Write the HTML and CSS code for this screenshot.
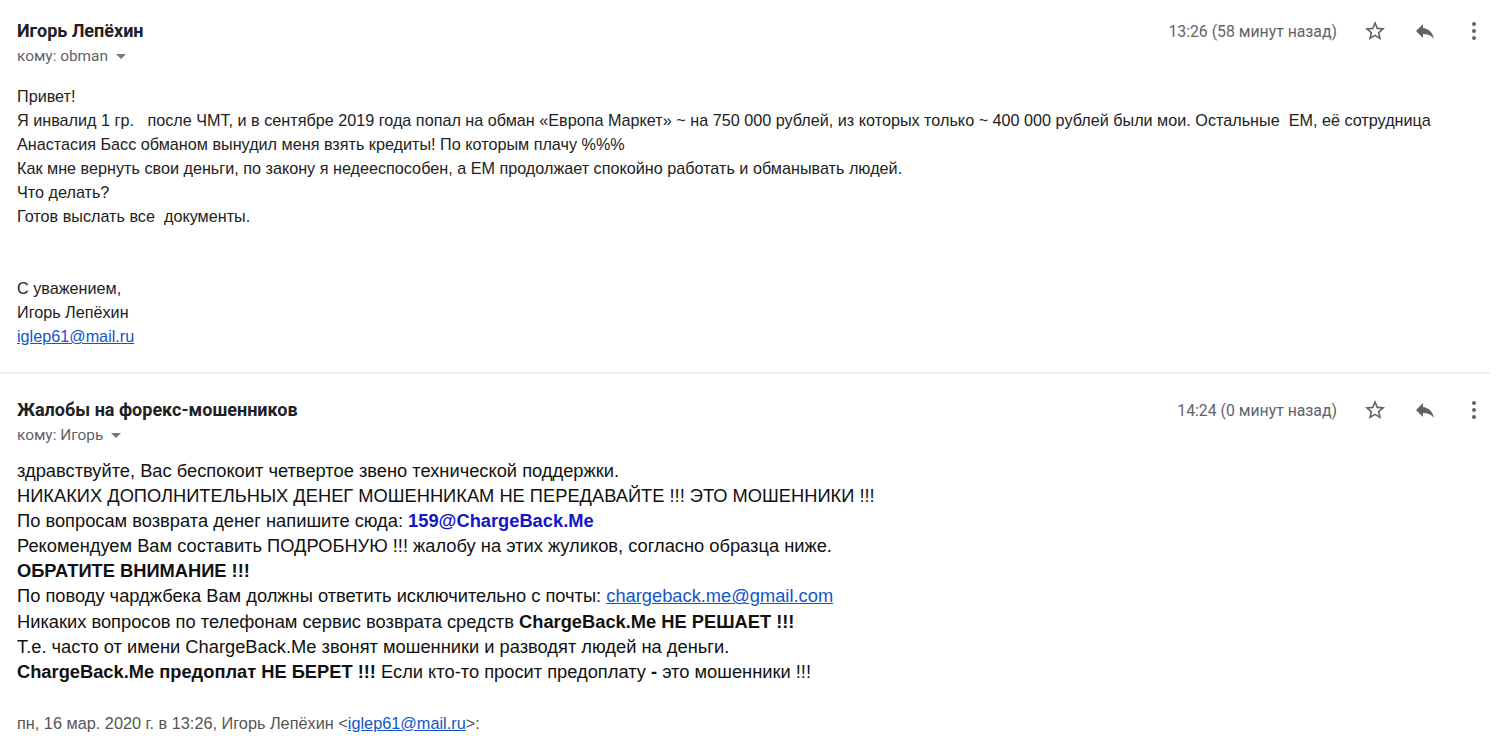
FILE: index.html
```html
<!DOCTYPE html>
<html lang="ru">
<head>
<meta charset="utf-8">
<link rel="stylesheet" href="styles.css">
</head>
<body>
<div class="thread">
  <div class="msg msg-first">
    <div class="msg-head">
      <div class="sender">
        <div class="name">Игорь Лепёхин</div>
        <div class="to">кому: obman <span class="caret"></span></div>
      </div>
      <div class="meta">
        <span class="time">13:26 (58 минут назад)</span>
        <svg class="ic ic-star" viewBox="0 0 24 24"><path d="M22 9.24l-7.19-.62L12 2 9.19 8.63 2 9.24l5.46 4.73L5.82 21 12 17.27 18.18 21l-1.63-7.03L22 9.24zM12 15.4l-3.76 2.27 1-4.28-3.32-2.88 4.38-.38L12 6.1l1.71 4.04 4.38.38-3.32 2.88 1 4.28L12 15.4z"/></svg>
        <svg class="ic ic-reply" viewBox="0 0 24 24"><path d="M10 9V5l-7 7 7 7v-4.1c5 0 8.5 1.6 11 5.1-1-5-4-10-11-11z"/></svg>
        <svg class="ic ic-more" viewBox="0 0 24 24"><circle cx="12" cy="5" r="2"/><circle cx="12" cy="12" r="2"/><circle cx="12" cy="19" r="2"/></svg>
      </div>
    </div>
    <div class="body body-first">
      <div>Привет!</div>
      <div>Я инвалид 1 гр.&nbsp;&nbsp; после ЧМТ, и в сентябре 2019 года попал на обман «Европа Маркет» ~ на 750 000 рублей, из которых только ~ 400 000 рублей были мои. Остальные&nbsp; ЕМ, её сотрудница Анастасия Басс обманом вынудил меня взять кредиты! По которым плачу %%%</div>
      <div>Как мне вернуть свои деньги, по закону я недееспособен, а ЕМ продолжает спокойно работать и обманывать людей.</div>
      <div>Что делать?</div>
      <div>Готов выслать все&nbsp; документы.</div>
      <div class="signature">
        <div>С уважением,</div>
        <div>Игорь Лепёхин</div>
        <div><a href="#">iglep61@mail.ru</a></div>
      </div>
    </div>
  </div>

  <div class="msg msg-second">
    <div class="msg-head">
      <div class="sender">
        <div class="name">Жалобы на форекс-мошенников</div>
        <div class="to">кому: Игорь <span class="caret"></span></div>
      </div>
      <div class="meta">
        <span class="time">14:24 (0 минут назад)</span>
        <svg class="ic ic-star" viewBox="0 0 24 24"><path d="M22 9.24l-7.19-.62L12 2 9.19 8.63 2 9.24l5.46 4.73L5.82 21 12 17.27 18.18 21l-1.63-7.03L22 9.24zM12 15.4l-3.76 2.27 1-4.28-3.32-2.88 4.38-.38L12 6.1l1.71 4.04 4.38.38-3.32 2.88 1 4.28L12 15.4z"/></svg>
        <svg class="ic ic-reply" viewBox="0 0 24 24"><path d="M10 9V5l-7 7 7 7v-4.1c5 0 8.5 1.6 11 5.1-1-5-4-10-11-11z"/></svg>
        <svg class="ic ic-more" viewBox="0 0 24 24"><circle cx="12" cy="5" r="2"/><circle cx="12" cy="12" r="2"/><circle cx="12" cy="19" r="2"/></svg>
      </div>
    </div>
    <div class="body body-second">
      <div>здравствуйте, Вас беспокоит четвертое звено технической поддержки.</div>
      <div>НИКАКИХ ДОПОЛНИТЕЛЬНЫХ ДЕНЕГ МОШЕННИКАМ НЕ ПЕРЕДАВАЙТЕ !!! ЭТО МОШЕННИКИ !!!</div>
      <div>По вопросам возврата денег напишите сюда: <b class="blue">159@ChargeBack.Me</b></div>
      <div>Рекомендуем Вам составить ПОДРОБНУЮ !!! жалобу на этих жуликов, согласно образца ниже.</div>
      <div><b>ОБРАТИТЕ ВНИМАНИЕ !!!</b></div>
      <div>По поводу чарджбека Вам должны ответить исключительно с почты: <a href="#">chargeback.me@gmail.com</a></div>
      <div>Никаких вопросов по телефонам сервис возврата средств <b>ChargeBack.Me НЕ РЕШАЕТ !!!</b></div>
      <div>Т.е. часто от имени ChargeBack.Me звонят мошенники и разводят людей на деньги.</div>
      <div><b>ChargeBack.Me предоплат НЕ БЕРЕТ !!!</b> Если кто-то просит предоплату <b>-</b> это мошенники !!!</div>
    </div>
    <div class="quote-attr">пн, 16 мар. 2020 г. в 13:26, Игорь Лепёхин &lt;<a href="#">iglep61@mail.ru</a>&gt;:</div>
  </div>
</div>
</body>
</html>
```

FILE: styles.css
```css
html, body {
  margin: 0;
  padding: 0;
  background: #ffffff;
}

.thread {
  width: 1490px;
  font-family: "Liberation Sans", Arial, sans-serif;
  color: #222222;
}

.msg {
  padding: 0 17px;
}

.msg-first {
  padding-top: 21px;
  padding-bottom: 24px;
  border-bottom: 2px solid #efefef;
}

.msg-second {
  padding-top: 26px;
}

.msg-head {
  display: flex;
  align-items: flex-start;
}

.sender {
  flex: 1;
}

.name {
  font-family: Roboto, "Liberation Sans", sans-serif;
  font-weight: 700;
  font-size: 18px;
  line-height: 20px;
  color: #202124;
}

.to {
  margin-top: 5px;
  font-family: Roboto, "Liberation Sans", sans-serif;
  font-size: 15.4px;
  line-height: 20px;
  color: #5f6368;
  display: flex;
  align-items: center;
  gap: 8px;
}

.caret {
  width: 0;
  height: 0;
  border-left: 5px solid transparent;
  border-right: 5px solid transparent;
  border-top: 5px solid #777777;
  margin-top: 1px;
}

.meta {
  display: flex;
  align-items: center;
  height: 20px;
  margin-right: -13px;
}

.time {
  font-family: Roboto, "Liberation Sans", sans-serif;
  font-size: 15.8px;
  color: #5f6368;
  margin-right: 26px;
}

.ic {
  width: 24px;
  height: 24px;
  fill: #5f6368;
  display: block;
}

.ic-reply {
  margin-left: 26px;
}

.ic-more {
  margin-left: 25px;
}

.body {
  margin-top: 18px;
}

.body-first {
  font-size: 16.2px;
  line-height: 24px;
}

.signature {
  margin-top: 48px;
}

.body-second {
  margin-top: 13px;
  font-size: 18.3px;
  line-height: 25.1px;
  color: #111111;
}

.blue {
  color: #1414c8;
}

a {
  color: #1155cc;
  text-decoration: underline;
}

.quote-attr {
  margin-top: 27px;
  font-size: 16.3px;
  line-height: 24px;
  color: #555555;
}
```
